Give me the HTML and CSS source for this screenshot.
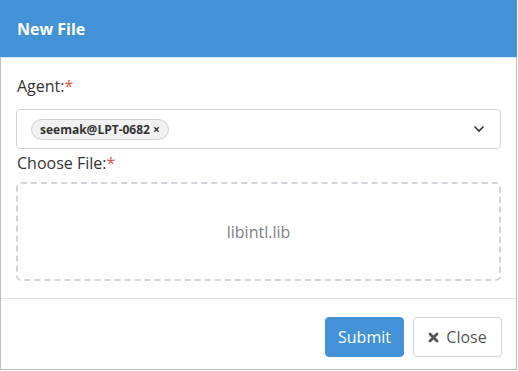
FILE: index.html
```html
<!DOCTYPE html>
<html>
<head>
<meta charset="utf-8">
<link rel="stylesheet" href="styles.css">
</head>
<body>
<div class="modal">
  <div class="modal-header">New File</div>
  <div class="modal-main">
    <div class="modal-body">
      <label class="label">Agent:<span class="req">*</span></label>
      <div class="select">
        <span class="tag">seemak@LPT-0682 <span class="tag-x">×</span></span>
        <svg class="chev" width="12" height="8" viewBox="0 0 12 8"><path d="M1.5 1.5 L6 6 L10.5 1.5" fill="none" stroke="#333" stroke-width="1.6"/></svg>
      </div>
      <label class="label">Choose File:<span class="req">*</span></label>
      <div class="dropzone">libintl.lib</div>
    </div>
    <div class="modal-footer">
      <button class="btn btn-primary">Submit</button>
      <button class="btn btn-default"><svg class="x-icon" width="11" height="11" viewBox="0 0 11 11"><path d="M2 2 L9 9 M9 2 L2 9" stroke="#555" stroke-width="2.8" stroke-linecap="round"/></svg>Close</button>
    </div>
  </div>
</div>
</body>
</html>
```
FILE: styles.css
```css
* { box-sizing: border-box; }
body {
  margin: 0;
  background: #fff;
  font-family: "Open Sans", "Noto Sans", sans-serif;
  color: #333;
}
.modal {
  width: 517px;
  height: 370px;
  display: flex;
  flex-direction: column;
}
.modal-header {
  height: 58px;
  background: #4392d5;
  color: #fff;
  font-weight: 700;
  font-size: 16px;
  padding-left: 17px;
  display: flex;
  align-items: center;
  border-bottom: 1px solid #d6e4f0;
}
.modal-main {
  flex: 1;
  border: 1px solid #bdbdbd;
  border-top: none;
  display: flex;
  flex-direction: column;
}
.modal-body {
  padding: 17px 15px 17px 15px;
  display: flex;
  flex-direction: column;
}
.label {
  font-size: 16px;
  line-height: 23px;
  color: #333;
  margin-left: 1px;
}
.req { color: #d9534f; }
.label:first-child { margin-bottom: 11px; }
.select {
  height: 40px;
  border: 1px solid #d4d4d4;
  border-radius: 4px;
  display: flex;
  align-items: center;
  padding-left: 14px;
  padding-right: 15px;
  margin-bottom: 3px;
}
.tag {
  height: 21px;
  border: 1px solid #cfcfcf;
  background: #f1f1f1;
  border-radius: 11px;
  font-size: 12px;
  font-weight: 700;
  padding: 0 8px 0 8px;
  display: inline-flex;
  align-items: center;
  color: #333;
}
.tag-x { margin-left: 3px; font-size: 12px; }
.chev { margin-left: auto; }
.dropzone {
  margin-top: 7px;
  height: 99px;
  border: 2px dashed #d0d4d9;
  border-radius: 5px;
  display: flex;
  align-items: center;
  justify-content: center;
  font-size: 16px;
  color: #7b8088;
}
.modal-footer {
  border-top: 1px solid #e5e5e5;
  flex: 1;
  display: flex;
  justify-content: flex-end;
  align-items: flex-start;
  padding: 18px 14px 0 0;
  gap: 9px;
}
.btn {
  height: 40px;
  font-family: inherit;
  font-size: 16px;
  border-radius: 4px;
  padding: 0;
  display: inline-flex;
  align-items: center;
  cursor: pointer;
}
.btn-primary {
  width: 79px;
  justify-content: center;
  background: #4392d5;
  border: 1px solid #4392d5;
  color: #fff;
}
.btn-default {
  width: 89px;
  background: #fff;
  border: 1px solid #d4d4d4;
  color: #555;
  justify-content: center;
}
.x-icon { margin-right: 7px; }
```
